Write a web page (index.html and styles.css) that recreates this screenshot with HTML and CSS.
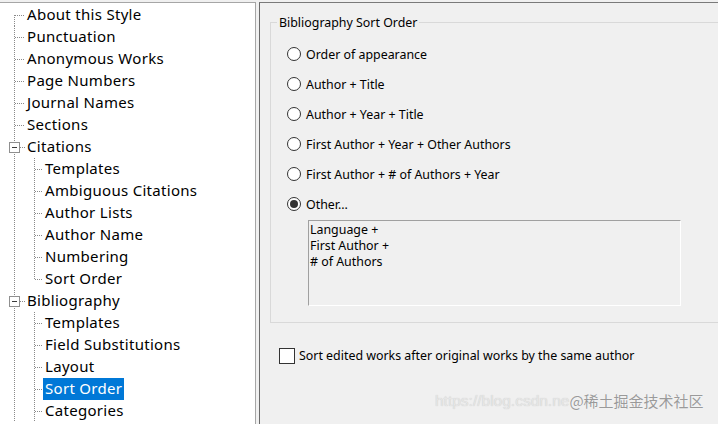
FILE: index.html
```html
<!DOCTYPE html>
<html>
<head>
<meta charset="utf-8">
<link rel="stylesheet" href="styles.css">
</head>
<body>
<div class="window">
  <div class="tree">
    <ul class="nodes">
      <li class="row"><svg class="g1" width="25" height="22"><path class="dot" d="M14.5 11V22M15 11.5H25"/></svg><span class="label">About this Style</span></li>
      <li class="row"><svg class="g1" width="25" height="22"><path class="dot" d="M14.5 0V22M15 11.5H25"/></svg><span class="label">Punctuation</span></li>
      <li class="row"><svg class="g1" width="25" height="22"><path class="dot" d="M14.5 0V22M15 11.5H25"/></svg><span class="label">Anonymous Works</span></li>
      <li class="row"><svg class="g1" width="25" height="22"><path class="dot" d="M14.5 0V22M15 11.5H25"/></svg><span class="label">Page Numbers</span></li>
      <li class="row"><svg class="g1" width="25" height="22"><path class="dot" d="M14.5 0V22M15 11.5H25"/></svg><span class="label">Journal Names</span></li>
      <li class="row"><svg class="g1" width="25" height="22"><path class="dot" d="M14.5 0V22M15 11.5H25"/></svg><span class="label">Sections</span></li>
      <li class="row"><svg class="g1" width="25" height="22"><path class="dot" d="M14.5 0V22M20 11.5H25"/><rect class="box" x="9.5" y="6.5" width="10" height="10"/><path class="minus" d="M12 11.5H17"/></svg><span class="label">Citations</span></li>
      <li class="row"><svg class="g2" width="43" height="22"><path class="dot" d="M14.5 0V22M34.5 0V22M35 11.5H43"/></svg><span class="label">Templates</span></li>
      <li class="row"><svg class="g2" width="43" height="22"><path class="dot" d="M14.5 0V22M34.5 0V22M35 11.5H43"/></svg><span class="label">Ambiguous Citations</span></li>
      <li class="row"><svg class="g2" width="43" height="22"><path class="dot" d="M14.5 0V22M34.5 0V22M35 11.5H43"/></svg><span class="label">Author Lists</span></li>
      <li class="row"><svg class="g2" width="43" height="22"><path class="dot" d="M14.5 0V22M34.5 0V22M35 11.5H43"/></svg><span class="label">Author Name</span></li>
      <li class="row"><svg class="g2" width="43" height="22"><path class="dot" d="M14.5 0V22M34.5 0V22M35 11.5H43"/></svg><span class="label">Numbering</span></li>
      <li class="row"><svg class="g2" width="43" height="22"><path class="dot" d="M14.5 0V22M34.5 0V11M35 11.5H43"/></svg><span class="label">Sort Order</span></li>
      <li class="row"><svg class="g1" width="25" height="22"><path class="dot" d="M14.5 0V22M20 11.5H25"/><rect class="box" x="9.5" y="6.5" width="10" height="10"/><path class="minus" d="M12 11.5H17"/></svg><span class="label">Bibliography</span></li>
      <li class="row"><svg class="g2" width="43" height="22"><path class="dot" d="M14.5 0V22M34.5 0V22M35 11.5H43"/></svg><span class="label">Templates</span></li>
      <li class="row"><svg class="g2" width="43" height="22"><path class="dot" d="M14.5 0V22M34.5 0V22M35 11.5H43"/></svg><span class="label">Field Substitutions</span></li>
      <li class="row"><svg class="g2" width="43" height="22"><path class="dot" d="M14.5 0V22M34.5 0V22M35 11.5H43"/></svg><span class="label">Layout</span></li>
      <li class="row"><svg class="g2" width="43" height="22"><path class="dot" d="M14.5 0V22M34.5 0V22M35 11.5H43"/></svg><span class="label selected">Sort Order</span></li>
      <li class="row"><svg class="g2" width="43" height="22"><path class="dot" d="M14.5 0V22M34.5 0V22M35 11.5H43"/></svg><span class="label">Categories</span></li>
    </ul>
  </div>
  <div class="panel">
    <fieldset class="group">
      <legend class="legend">Bibliography Sort Order</legend>
      <div class="options">
        <div class="option"><span class="radio"></span><span class="opt-text">Order of appearance</span></div>
        <div class="option"><span class="radio"></span><span class="opt-text">Author + Title</span></div>
        <div class="option"><span class="radio"></span><span class="opt-text">Author + Year + Title</span></div>
        <div class="option"><span class="radio"></span><span class="opt-text">First Author + Year + Other Authors</span></div>
        <div class="option"><span class="radio"></span><span class="opt-text">First Author + # of Authors + Year</span></div>
        <div class="option"><span class="radio checked"></span><span class="opt-text">Other...</span></div>
      </div>
      <div class="custom">Language +<br>First Author +<br># of Authors</div>
    </fieldset>
    <div class="check-row"><span class="checkbox"></span><span class="opt-text">Sort edited works after original works by the same author</span></div>
    <div class="watermark"><span class="wm-url">https://blog.csdn.ne</span><span class="wm-brand">@稀土掘金技术社区</span></div>
  </div>
</div>
</body>
</html>
```

FILE: styles.css
```css
html, body {
  margin: 0;
  padding: 0;
}
body {
  background: #f0f0f0;
  width: 718px;
  height: 424px;
  overflow: hidden;
}
.window {
  display: flex;
  height: 424px;
  padding-top: 2px;
  box-sizing: border-box;
}
.tree {
  width: 255px;
  flex: none;
  background: #ffffff;
  border-top: 1px solid #a6a6a6;
  border-right: 1px solid #a6a6a6;
  overflow: hidden;
  font-family: "Noto Sans", "Noto Sans CJK SC", sans-serif;
  font-size: 15px;
  letter-spacing: 0.3px;
  color: #000;
}
.nodes {
  list-style: none;
  margin: 0;
  padding: 1px 0 0 0;
}
.row {
  display: flex;
  align-items: center;
  height: 22px;
}
.row svg {
  flex: none;
  display: block;
}
.dot {
  fill: none;
  stroke: #8a8a8a;
  stroke-width: 1;
  stroke-dasharray: 1 1;
}
.box {
  fill: #ffffff;
  stroke: #8f8f8f;
  stroke-width: 1;
}
.minus {
  stroke: #3c3c3c;
  stroke-width: 1;
}
.label {
  display: block;
  padding: 0 2px;
  height: 22px;
  line-height: 21px;
  white-space: nowrap;
}
.label.selected {
  background: #0078d7;
  color: #ffffff;
}
.panel {
  flex: 1;
  margin-left: 3px;
  border-left: 1px solid #6a6a6a;
  border-top: 1px solid #7a7a7a;
  background: #f0f0f0;
  overflow: hidden;
  position: relative;
  font-family: "Noto Sans", "Noto Sans CJK SC", sans-serif;
  font-size: 12.4px;
  color: #000;
}
.group {
  margin: 11px -30px 0 10px;
  padding: 0 0 16px 0;
  border: 1px solid #d9d9d9;
  min-width: 0;
}
.legend {
  margin-left: 6px;
  padding: 0 2px;
  line-height: 17px;
}
.options {
  display: flex;
  flex-direction: column;
  padding-top: 8px;
}
.option {
  display: flex;
  align-items: center;
  height: 30px;
  padding-left: 16px;
}
.radio {
  flex: none;
  width: 12px;
  height: 12px;
  border: 1px solid #333333;
  border-radius: 50%;
  background: #ffffff;
  margin-right: 5px;
  display: flex;
  align-items: center;
  justify-content: center;
}
.radio.checked::after {
  content: "";
  width: 8px;
  height: 8px;
  border-radius: 50%;
  background: #333333;
}
.opt-text {
  white-space: nowrap;
  line-height: 17px;
}
.custom {
  margin: 1px 0 0 37px;
  width: 370px;
  height: 83px;
  border-top: 1px solid #a0a0a0;
  border-left: 1px solid #a0a0a0;
  border-right: 1px solid #ffffff;
  border-bottom: 1px solid #ffffff;
  background: #f0f0f0;
  padding: 1px 0 0 1px;
  box-sizing: content-box;
  line-height: 16px;
  white-space: nowrap;
}
.check-row {
  display: flex;
  align-items: center;
  margin: 24px 0 0 19px;
  height: 17px;
}
.checkbox {
  flex: none;
  width: 14px;
  height: 14px;
  border: 1px solid #333333;
  background: #ffffff;
  margin-right: 4px;
}
.watermark {
  position: absolute;
  left: 175px;
  top: 387px;
  white-space: nowrap;
  display: flex;
  align-items: center;
}
.wm-url {
  font-family: "Liberation Sans", sans-serif;
  font-size: 15.5px;
  color: #e6e6e6;
  text-shadow: 0 0 1px #c4c4c4;
}
.wm-brand {
  font-family: "Noto Sans CJK SC", sans-serif;
  font-size: 15px;
  color: #9a9a9a;
  text-shadow: 0 0 1px #ffffff;
}
```
